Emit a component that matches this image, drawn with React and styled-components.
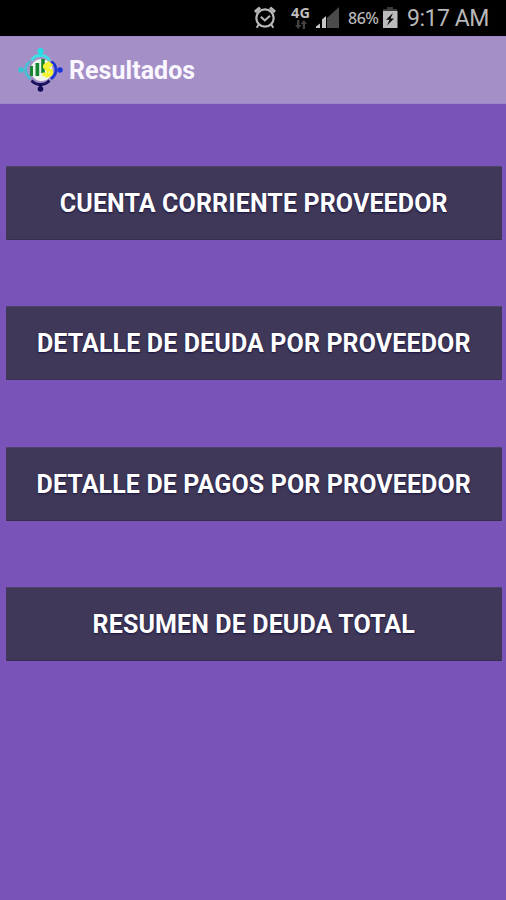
import React from "react";
import styled, { createGlobalStyle } from "styled-components";

const GlobalStyle = createGlobalStyle`
  * { box-sizing: border-box; }
  html, body { margin: 0; background: #7953b8; }
`;

const Screen = styled.div`
  display: flex;
  flex-direction: column;
  width: 506px;
  height: 900px;
  overflow: hidden;
  background: #7953b8;
  font-family: Roboto, sans-serif;
`;

const StatusBar = styled.header`
  display: flex;
  align-items: center;
  height: 36px;
  flex: none;
  padding-left: 253px;
  background: #000;
  color: #b8b8b8;
  white-space: nowrap;
`;

const AlarmIcon = styled.svg`
  width: 24px;
  height: 26px;
  flex: none;
`;

const Network = styled.div`
  display: flex;
  flex-direction: column;
  align-items: center;
  width: 21px;
  height: 26px;
  margin-left: 13px;
`;

const NetworkLabel = styled.span`
  font: 700 14.5px/14px "Noto Sans", sans-serif;
  color: #bdbdbd;
`;

const ArrowsIcon = styled.svg`
  width: 14px;
  height: 9px;
  margin-top: 1px;
`;

const SignalIcon = styled.svg`
  width: 25px;
  height: 24px;
  margin-left: 4px;
  flex: none;
`;

const BatteryLabel = styled.span`
  width: 31px;
  margin-left: 8px;
  font: 500 16px/20px "Noto Sans", sans-serif;
  letter-spacing: -0.5px;
`;

const BatteryIcon = styled.svg`
  width: 16px;
  height: 24px;
  margin: 0 0 1px 3px;
  flex: none;
`;

const Clock = styled.span`
  margin: 1px 0 0 9px;
  font-size: 23px;
  line-height: 35px;
  letter-spacing: -0.45px;
`;

const TitleBar = styled.div`
  display: flex;
  align-items: center;
  height: 67.5px;
  flex: none;
  padding-left: 17px;
  background: #a58fc7;
  border-top: 1px solid #a383cc;
  border-bottom: 1px solid #a085c9;
`;

const Logo = styled.svg`
  width: 48px;
  height: 48px;
  flex: none;
`;

const Title = styled.h1`
  margin: 2px 0 0 4px;
  font-size: 25px;
  font-weight: 700;
  line-height: 30px;
  letter-spacing: 0.04px;
  color: #faf7ff;
`;

const Menu = styled.main`
  display: flex;
  flex-direction: column;
  gap: 66.5px;
  padding: 62px 4.5px 0 6px;
`;

const MenuButton = styled.button`
  height: 74px;
  padding: 2px 0 0;
  border: 0;
  border-top: 1px solid #4f4268;
  border-bottom: 1px solid #382e50;
  border-radius: 1px;
  background: #3f3858;
  color: #fff;
  font: 700 25px/30px Roboto, sans-serif;
  letter-spacing: 0.13px;
  text-shadow: 0 1px 2px #17103f;
  white-space: nowrap;
`;

const items = [
  "CUENTA CORRIENTE PROVEEDOR",
  "DETALLE DE DEUDA POR PROVEEDOR",
  "DETALLE DE PAGOS POR PROVEEDOR",
  "RESUMEN DE DEUDA TOTAL",
];

export default function App() {
  return (
    <>
      <GlobalStyle />
      <Screen>
        <StatusBar>
          <AlarmIcon viewBox="0 0 24 26" fill="none" stroke="#b8b8b8">
            <circle cx="12" cy="13" r="8.7" strokeWidth="2.2" />
            <path d="M2 7 7 2.6M22 7 17 2.6" strokeWidth="3" />
            <path d="m5.7 19.5-2 3.2M18.3 19.5l2 3.2" strokeWidth="2" />
            <path d="m7.8 11.8 4 3.7 5.2-4.8" strokeWidth="2" />
          </AlarmIcon>
          <Network>
            <NetworkLabel>4G</NetworkLabel>
            <ArrowsIcon viewBox="0 0 14 9" fill="#424242">
              <path d="M3 0h2.4v5h2.1L4.2 9 1 5h2zM8.7 9h2.4V4h2L9.9 0 6.7 4h2z" />
            </ArrowsIcon>
          </Network>
          <SignalIcon viewBox="0 0 25 24">
            <path d="M12 22V12L24 1v21z" fill="#4b4b4b" />
            <path d="M1 22v-1.5l4-3V22zM7 22v-8.5l4-3.5v12z" fill="#c6c6c6" />
          </SignalIcon>
          <BatteryLabel>86%</BatteryLabel>
          <BatteryIcon viewBox="0 0 16 24">
            <path d="M5 1h6v2h4v3H1V3h4z" fill="#3b3b3b" />
            <path d="M1 5h14.5v17H1z" fill="#bcbcbc" />
            <path d="m11 7-7 6.8h3.5L5 19.5l7-6.9H8.5z" fill="#080808" />
          </BatteryIcon>
          <Clock>9:17 AM</Clock>
        </StatusBar>
        <TitleBar>
          <Logo viewBox="0 0 48 48" fill="none" strokeWidth="2.8">
            <circle cx="24.5" cy="24" r="11" fill="#eef5ed" />
            <path d="M14.5 14.5Q17 9.5 23.5 9.5T32.5 14.5" stroke="#40dfe5" />
            <path d="M13 15.5Q8.5 19 8.5 24t5 9" stroke="#49bed2" />
            <path d="M34.5 15.5Q39 19 39 24t-5 9" stroke="#1935d4" />
            <path d="M14.5 34.5Q18 38.5 23.5 38.5t9-4" stroke="#1b1360" />
            <path d="M23.5 6v4" stroke="#25dfe7" />
            <path d="M23.5 38v4" stroke="#120a54" />
            <circle cx="23.5" cy="5" r="3" fill="#25dfe7" />
            <circle cx="4" cy="24" r="2.7" fill="#36c6d2" />
            <circle cx="43" cy="24" r="2.7" fill="#1834dc" />
            <circle cx="23.5" cy="43" r="2.8" fill="#120a54" />
            <path d="M13 20h3v10h-3zM18.5 17h3.7v13h-3.7zM24.2 13h3.6v14h-3.6z" fill="#168632" />
            <g stroke="#f3f32b">
              <path d="M35 20q-2-2-5-1.7-3.3.7-2.2 3.2.7 1.2 3.8 2 3.8 1 2.6 4-1.2 2.8-8.7.5" strokeWidth="3.4" />
              <path d="m31.5 15.5-1.5 16" strokeWidth="2.4" />
            </g>
          </Logo>
          <Title>Resultados</Title>
        </TitleBar>
        <Menu>
          {items.map((label) => (
            <MenuButton key={label}>{label}</MenuButton>
          ))}
        </Menu>
      </Screen>
    </>
  );
}
